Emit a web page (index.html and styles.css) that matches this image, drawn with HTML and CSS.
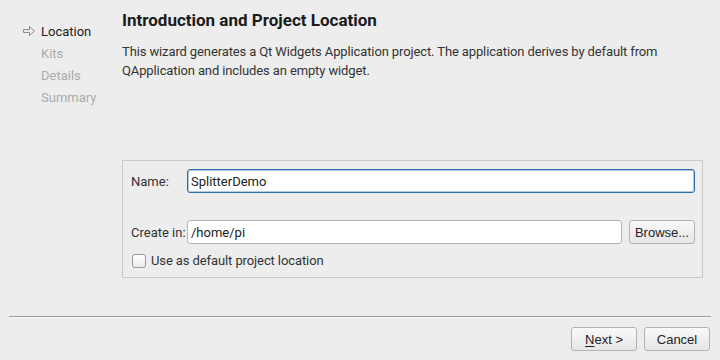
FILE: index.html
```html
<!DOCTYPE html>
<html lang="en">

<head>
    <meta charset="UTF-8">
    <meta name="viewport" content="width=device-width, initial-scale=1.0">
    <title>New Project - Qt Widgets Application</title>
    <link rel="stylesheet" href="styles.css">
</head>

<body>

    <div class="wizard">

        <div class="content">

            <!-- wizard steps on the left -->
            <ul class="steps">
                <li class="step current">
                    <svg class="arrow" width="14" height="12" viewBox="0 0 14 12">
                        <path d="M1.5 4.5 H7.5 V1.5 L12.5 6 L7.5 10.5 V7.5 H1.5 Z" fill="none" stroke="#8a8a8a" stroke-width="1" stroke-linejoin="round"/>
                    </svg>
                    <span>Location</span>
                </li>
                <li class="step">Kits</li>
                <li class="step">Details</li>
                <li class="step">Summary</li>
            </ul>

            <section class="page">
                <h1>Introduction and Project Location</h1>
                <p class="intro">This wizard generates a Qt Widgets Application project. The application derives by default from QApplication and includes an empty widget.</p>

                <div class="group">
                    <div class="row name-row">
                        <label class="label" for="name-input">Name:</label>
                        <input type="text" id="name-input" class="field focused" value="SplitterDemo">
                    </div>
                    <div class="row path-row">
                        <label class="label" for="path-input">Create in:</label>
                        <input type="text" id="path-input" class="field" value="/home/pi">
                        <button class="btn browse">Browse...</button>
                    </div>
                    <label class="check">
                        <span class="box"></span>
                        <span>Use as default project location</span>
                    </label>
                </div>
            </section>

        </div>

        <footer class="footer">
            <hr class="separator">
            <div class="buttons">
                <button class="btn"><u>N</u>ext &gt;</button>
                <button class="btn">Cancel</button>
            </div>
        </footer>

    </div>

</body>

</html>
```

FILE: styles.css
```css
:root {
    --bg: #ededed;
    --text: #222;
    --muted: #ababab;
    --border: #c9c9c9;
    --field-border: #b4b4b4;
    --focus: #2f6aa8;
}

* {
    margin: 0;
    padding: 0;
    box-sizing: border-box;
}

body {
    background-color: var(--bg);
    color: var(--text);
    font-family: Roboto, "Liberation Sans", sans-serif;
    font-size: 13px;
}

.wizard {
    display: flex;
    flex-direction: column;
    height: 360px;
}

.content {
    display: flex;
    flex: 1 1 0%;
}

/* left column with the steps */
.steps {
    list-style: none;
    width: 122px;
    padding: 20px 0 0 22px;
}

.step {
    display: flex;
    align-items: center;
    height: 22px;
    padding-left: 19px;
    color: var(--muted);
}

.step.current {
    padding-left: 0;
    color: var(--text);
}

.step .arrow {
    margin-right: 5px;
}

.page {
    flex: 1 1 0%;
    padding: 10px 17px 0 0;
}

.page h1 {
    font-size: 17px;
    font-weight: bold;
    line-height: 20px;
    color: #1b1b1b;
}

.intro {
    margin-top: 12px;
    line-height: 19px;
    letter-spacing: -0.12px;
    color: #333;
    max-width: 560px;
}

/* the framed box with the form */
.group {
    margin-top: 80px;
    border: 1px solid var(--border);
    height: 118px;
    padding: 8px 7px 0 8px;
}

.row {
    display: flex;
    align-items: center;
}

.path-row {
    margin-top: 27px;
}

.label {
    width: 56px;
    color: #333;
}

.field {
    appearance: none;
    outline: none;
    flex: 1 1 0%;
    height: 24px;
    padding: 0 3px;
    border: 1px solid var(--field-border);
    border-radius: 3px;
    background-color: white;
    font-family: inherit;
    font-size: 13px;
    color: #222;
}

.field.focused {
    border-color: var(--focus);
    box-shadow: inset 0 0 0 1px rgba(47, 106, 168, 0.35);
}

.btn {
    appearance: none;
    height: 24px;
    width: 66px;
    border: 1px solid #b2b2b2;
    border-radius: 3px;
    background: linear-gradient(#f9f9f9, #e6e6e6);
    font-family: "Liberation Sans", Arial, sans-serif;
    font-size: 13px;
    color: #222;
}

.btn u {
    text-underline-offset: 2px;
}

.browse {
    margin-left: 7px;
}

.check {
    display: flex;
    align-items: center;
    margin-top: 9px;
    color: #333;
    letter-spacing: -0.1px;
}

.check .box {
    width: 14px;
    height: 14px;
    margin: 0 5px 0 1px;
    border: 1px solid #9a9a9a;
    border-radius: 3px;
    background: linear-gradient(#fdfdfd, #ececec);
}

.footer {
    height: 44px;
}

.separator {
    margin: 0 9px;
    border: none;
    border-top: 1px solid #9c9c9c;
    border-bottom: 1px solid #fafafa;
}

.buttons {
    display: flex;
    justify-content: flex-end;
    gap: 7px;
    padding: 9px 10px 0 0;
}
```
